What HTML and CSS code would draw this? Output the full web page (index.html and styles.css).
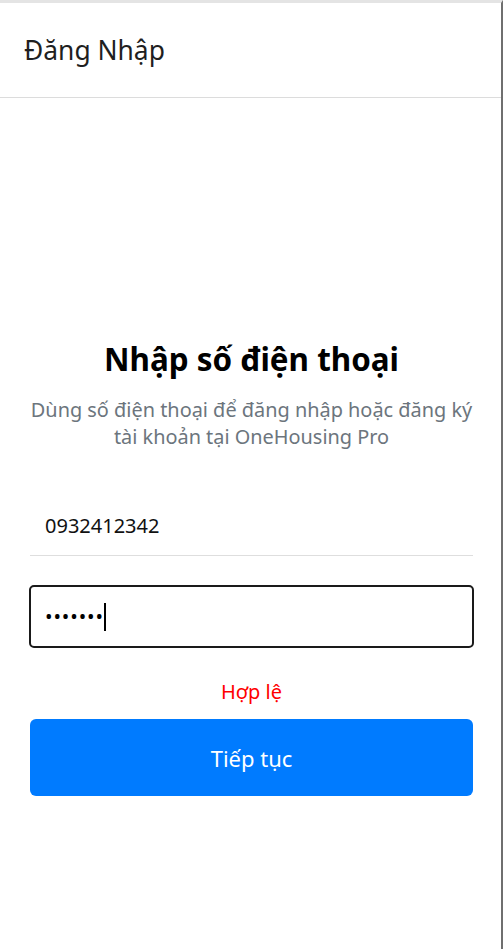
FILE: index.html
```html
<!DOCTYPE html>
<html lang="vi">
<head>
<meta charset="utf-8">
<title>Đăng Nhập</title>
<link rel="stylesheet" href="styles.css">
</head>
<body>
<div class="frame">
  <header class="topbar">
    <h1 class="topbar-title">Đăng Nhập</h1>
  </header>
  <main class="content">
    <h2 class="title">Nhập số điện thoại</h2>
    <p class="subtitle">Dùng số điện thoại để đăng nhập hoặc đăng ký tài khoản tại OneHousing Pro</p>
    <form class="form">
      <div class="phone-field">0932412342</div>
      <div class="pass-field"><span class="dots">•••••••</span><span class="caret"></span></div>
      <p class="status">Hợp lệ</p>
      <button type="button" class="btn">Tiếp tục</button>
    </form>
  </main>
</div>
</body>
</html>
```
FILE: styles.css
```css
* { box-sizing: border-box; }
html, body { margin: 0; padding: 0; background: #fff; }
body {
  font-family: "Noto Sans", "Open Sans", sans-serif;
  color: #212529;
}
.frame {
  height: 949px;
  border-top: 3px solid #e4e4e4;
  border-right: 2px solid #6f6f6f;
}
.topbar {
  height: 95px;
  border-bottom: 1px solid #dcdcdc;
  display: flex;
  align-items: center;
  padding-left: 24px;
}
.topbar-title {
  margin: 0;
  font-size: 26.4px;
  font-weight: 400;
  color: #1f1f1f;
}
.content {
  padding: 241px 28px 0 30px;
  text-align: center;
}
.title {
  margin: 0;
  font-size: 31.4px;
  font-weight: 700;
  color: #000;
  line-height: 40px;
}
.subtitle {
  margin: 17px 0 0;
  font-size: 19.9px;
  line-height: 27px;
  color: #6c757d;
}
.form {
  margin-top: 57px;
  display: flex;
  flex-direction: column;
}
.phone-field {
  text-align: left;
  height: 49px;
  padding: 0 15px;
  font-size: 20px;
  line-height: 37px;
  color: #111;
  border-bottom: 1px solid #dedede;
}
.pass-field {
  margin-top: 29px;
  margin-left: -1px;
  margin-right: -1px;
  height: 63px;
  border: 2px solid #1a1a1a;
  border-radius: 5px;
  display: flex;
  align-items: center;
  padding-left: 14px;
  text-align: left;
}
.dots {
  font-size: 20px;
  letter-spacing: 0.9px;
  color: #000;
}
.caret {
  width: 2px;
  height: 28px;
  background: #000;
  margin-left: 0;
}
.status {
  margin: 32px 0 0;
  font-size: 20px;
  line-height: 24px;
  color: #ff0000;
}
.btn {
  margin-top: 15px;
  height: 77px;
  border: none;
  border-radius: 6px;
  background: #007bff;
  color: #fff;
  font-family: inherit;
  font-size: 22px;
}
```
